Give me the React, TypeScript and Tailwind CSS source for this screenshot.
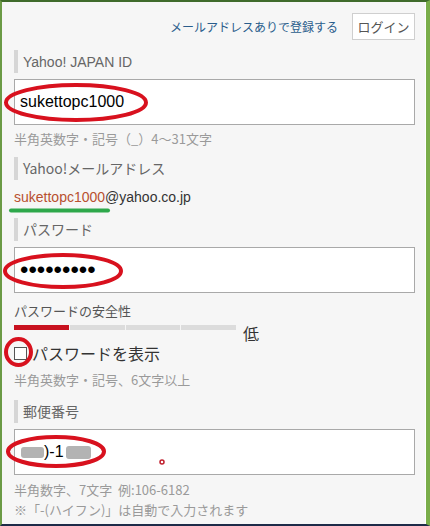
import React from "react";

const jp = { fontFamily: '"Noto Sans CJK JP", "Noto Sans", sans-serif' };
const ar = { fontFamily: '"Liberation Sans", Arial, sans-serif' };

function Label({ children }: { children: React.ReactNode }) {
  return (
    <div className="h-[23px] border-l-4 border-[#d6d6d6] pl-[5px] text-[14px] leading-[23px] text-[#666]" style={jp}>
      {children}
    </div>
  );
}

export default function App() {
  return (
    <div className="relative w-[430px] h-[526px] overflow-hidden border-t-2 border-l-2 border-r-4 border-b-2 border-t-[#3f6b2b] border-l-[#6b9a45] border-r-[#79ad4a] border-b-[#1d2a48] bg-[#f6f6f6]">
      <div className="h-full border-r border-white pl-[12px] pr-[10px] flex flex-col">
        <div className="flex items-center justify-end mt-[11px] h-[27px]">
          <span className="text-[12px] text-[#2a5d8c] mr-[14px]" style={jp}>メールアドレスありで登録する</span>
          <div className="h-[27px] w-[63px] border border-[#cfcfcf] bg-white flex items-center justify-center text-[13px] text-[#555]" style={jp}>
            ログイン
          </div>
        </div>

        <div className="mt-[10px]"><Label><span style={ar}>Yahoo! JAPAN ID</span></Label></div>
        <div className="mt-[6px] h-[46px] border border-[#a9a9a9] bg-white flex items-center pl-[5px] text-[16px] text-black" style={ar}>
          sukettopc1000
        </div>
        <div className="mt-[4px] h-[20px] leading-[20px] text-[13px] text-[#9a9a9a]" style={jp}>半角英数字・記号（_）4〜31文字</div>

        <div className="mt-[8px]"><Label>Yahoo!メールアドレス</Label></div>
        <div className="mt-[7px] h-[20px] leading-[20px] text-[14px] text-[#333]" style={ar}>
          <span className="text-[#b8502f]">sukettopc1000</span>@yahoo.co.jp
        </div>

        <div className="mt-[11px]"><Label>パスワード</Label></div>
        <div className="mt-[6px] h-[46px] border border-[#a9a9a9] bg-white flex items-center pl-[5px] text-[24px] leading-none text-black" style={ar}>
          •••••••••
        </div>
        <div className="mt-[8px] h-[20px] leading-[20px] text-[13px] text-[#555]" style={jp}>パスワードの安全性</div>
        <div className="flex items-start">
          <div className="mt-[4px] h-[5px] w-[222px] flex gap-[1px]">
            <div className="flex-1 bg-[#c8121f]" />
            <div className="flex-1 bg-[#dcdcdc]" />
            <div className="flex-1 bg-[#dcdcdc]" />
            <div className="flex-1 bg-[#dcdcdc]" />
          </div>
          <div className="ml-[7px] mt-[4px] text-[16px] leading-[16px] text-[#333]" style={jp}>低</div>
        </div>
        <div className="mt-[2px] h-[20px] flex items-center">
          <div className="w-[13px] h-[13px] border border-[#555] bg-white" />
          <span className="ml-[5px] text-[16px] text-[#333]" style={jp}>パスワードを表示</span>
        </div>
        <div className="mt-[7px] h-[20px] leading-[20px] text-[13px] text-[#9a9a9a]" style={jp}>半角英数字・記号、6文字以上</div>

        <div className="mt-[10px]"><Label>郵便番号</Label></div>
        <div className="mt-[6px] h-[46px] border border-[#a9a9a9] bg-white flex items-center pl-[6px] text-[16px] text-black" style={ar}>
          <span className="inline-block w-[23px] h-[11px] rounded-[3px] bg-[#b3b3b3]" />
          <span>)-1</span>
          <span className="inline-block ml-[2px] w-[25px] h-[13px] rounded-[3px] bg-[#b3b3b3]" />
        </div>
        <div className="mt-[5px] h-[20px] leading-[20px] text-[13px] text-[#9a9a9a]" style={jp}>半角数字、7文字&nbsp;&nbsp;例:106-6182</div>
        <div className="h-[20px] leading-[20px] text-[13px] text-[#9a9a9a]" style={jp}>※「-(ハイフン)」は自動で入力されます</div>
      </div>

      {/* annotations */}
      <svg className="absolute left-[-2px] top-[-2px] pointer-events-none" width="430" height="526" viewBox="0 0 430 526">
        <ellipse cx="76" cy="102.5" rx="70" ry="17.5" fill="none" stroke="#d8111e" strokeWidth="4" />
        <ellipse cx="63" cy="271" rx="58" ry="16" fill="none" stroke="#d8111e" strokeWidth="4" />
        <ellipse cx="18.5" cy="352" rx="12.5" ry="13" fill="none" stroke="#d8111e" strokeWidth="4" />
        <ellipse cx="56" cy="451.5" rx="48" ry="14.5" fill="none" stroke="#d8111e" strokeWidth="4" />
        <circle cx="162" cy="462" r="2" fill="none" stroke="#c0202e" strokeWidth="1.5" />
        <line x1="11" y1="210.5" x2="108" y2="210.5" stroke="#2ea84b" strokeWidth="4" strokeLinecap="round" />
      </svg>
    </div>
  );
}
